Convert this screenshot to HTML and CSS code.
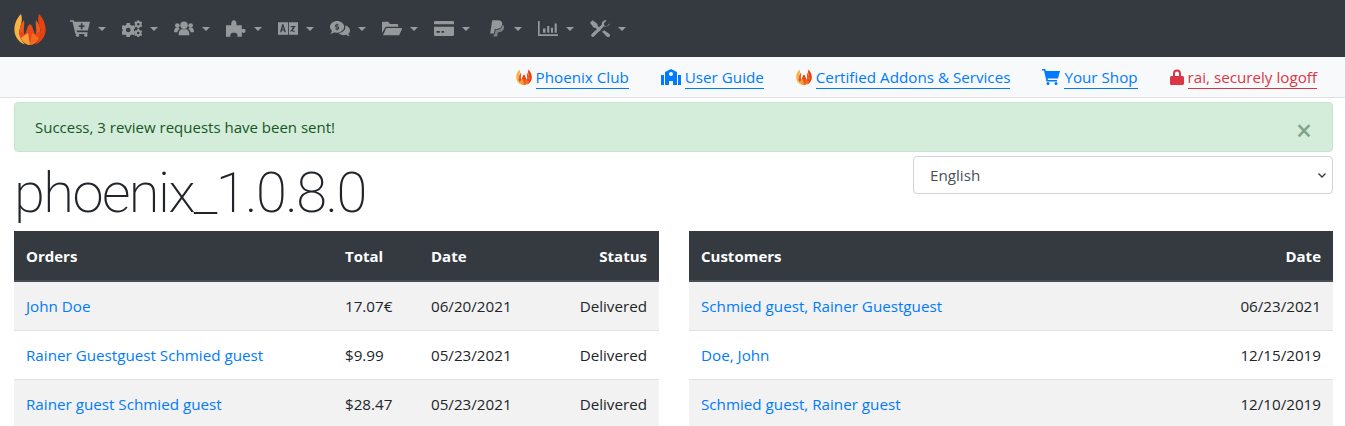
FILE: index.html
```html
<!DOCTYPE html>
<html lang="en">
<head>
<meta charset="UTF-8">
<title>phoenix_1.0.8.0</title>
<link rel="stylesheet" href="styles.css">
</head>
<body>
<svg class="defs" width="0" height="0">
  <symbol id="flame" viewBox="0 0 32 32">
    <path d="M7 1C2 6-1 14 1 21c1.500 5 5 9 10 10.500C7 27 4 21 6 15c1-4 3-8 1-14z" fill="#f7b446"/>
    <path d="M25 1c5 5 8 13 6 20-1.500 5-5 9-10 10.500C25 27 28 21 26 15c-1-4-3-8-1-14z" fill="#e8420f"/>
    <path d="M10 7c-3 4-5 8-4 12l4 2c-1-5 1-9 0-14zM22 7c3 4 5 8 4 12l-4 2c1-5-1-9 0-14z" fill="#ee5a1a"/>
    <path d="M5 18l6 3 2-5 1-3 2-2 2 2 1 3 2 5 6-3c0 8-6 14-11 14S5 26 5 18z" fill="#e8481a"/>
    <path d="M7 25l7-5 2 12c-4 0-7-3-9-7z" fill="#f9a03a"/>
    <path d="M25 25l-7-5-2 12c4 0 7-3 9-7z" fill="#f46a1f"/>
  </symbol>
</svg>

<nav class="topbar">
  <svg class="logo" width="32" height="32"><use href="#flame"/></svg>
  <ul class="menu">
    <li class="menu-item">
      <svg class="menu-icon" viewBox="0 0 24 20"><path d="M0 0h4.500l.7 2H24l-2.500 10.500H8l.4 2H21v2H6.500L3 2H0z"/><circle cx="9" cy="18" r="2"/><circle cx="19" cy="18" r="2"/><path d="M13 3.800h2v2.500h2.500v2H15v2.500h-2V8.300h-2.500v-2H13z" fill="#343a40"/></svg>
    </li>
    <li class="menu-item">
      <svg class="menu-icon" viewBox="0 0 24 20"><path fill-rule="evenodd" d="M5.500 3.500h4l.5 2.300 1.800 1 2.200-.8 2 3.400-1.700 1.600v2l1.700 1.600-2 3.400-2.200-.8-1.800 1-.5 2.300h-4l-.5-2.300-1.800-1-2.200.8-2-3.400L.7 12.900v-2L-1 9.300l2-3.400 2.200.8 1.800-1zm2 5.500a2.800 2.800 0 1 0 0 5.600 2.800 2.800 0 0 0 0-5.600z"/><path fill-rule="evenodd" d="M18.500 0h2l.3 1.300 1.200.7 1.300-.4 1 1.700-1 1v1.400l1 1-1 1.700-1.300-.4-1.200.7-.3 1.300h-2l-.3-1.300-1.200-.7-1.300.4-1-1.700 1-1V4.300l-1-1 1-1.700 1.300.4 1.200-.7zm1 3.500a1.500 1.500 0 1 0 0 3 1.500 1.500 0 0 0 0-3zM18.500 10.500h2l.3 1.300 1.200.7 1.300-.4 1 1.700-1 1v1.400l1 1-1 1.700-1.300-.4-1.200.7-.3 1.300h-2l-.3-1.300-1.200-.7-1.300.4-1-1.700 1-1v-1.400l-1-1 1-1.700 1.300.4 1.200-.7zm1 3.500a1.500 1.500 0 1 0 0 3 1.500 1.500 0 0 0 0-3z"/></svg>
    </li>
    <li class="menu-item">
      <svg class="menu-icon" viewBox="0 0 24 20"><circle cx="12" cy="6" r="4.500"/><circle cx="4" cy="6.500" r="2.800"/><circle cx="20" cy="6.500" r="2.800"/><path d="M5.500 18c0-5 2-7 4.500-7h4c2.500 0 4.500 2 4.500 7z"/><path d="M0 14.500c0-3.500 1-5.500 3-5.500h2.500c.5.500 1 1.200 1.500 1.700C5 12 4.300 13 4.200 14.500zM24 14.500c0-3.500-1-5.500-3-5.500h-2.500c-.5.500-1 1.200-1.500 1.700 2 1.300 2.700 2.300 2.800 3.800z"/></svg>
    </li>
    <li class="menu-item">
      <svg class="menu-icon" viewBox="0 0 24 20"><path d="M0 6h6.500C6 3 7 0 9.500 0S13 3 12.500 6H19v5c2-1.500 4.500-.8 4.500 1.800S21 16 19 14.500V20h-5.500c.8-2.500.2-5-4-5s-4.800 2.500-4 5H0z"/></svg>
    </li>
    <li class="menu-item">
      <svg class="menu-icon" viewBox="0 0 24 20"><path d="M0 2.500h12v15H0zM13 2.500h11v15H13z"/><path d="M5 5L2.500 14.500h1.800l.5-2h2.400l.5 2h1.800L6.500 5zM5.200 11l.8-3 .8 3zM15 7h6v1.200h-1c-.4 2-1.600 3.200-2.600 4l2.800 1.100-.4 1.100-3.700-1.500-1 1-.7-.8c1-.6 2.700-2 3.300-4.900H15z" fill="#343a40"/></svg>
    </li>
    <li class="menu-item">
      <svg class="menu-icon" viewBox="0 0 24 20"><path fill-rule="evenodd" d="M8.500 1C13 1 17 4 17 8s-4 7-8.500 7c-1.200 0-2.300-.2-3.300-.6C4 15.300 2.500 16 .5 16c1-1 1.700-2 2-3.200C1 11.600 0 10 0 8 0 4 4 1 8.500 1zM8 4v1c-1.200.1-2 .9-2 1.900 0 2.100 3.500 1.500 3.500 2.500 0 .3-.4.600-1 .6-.5 0-1-.2-1.400-.5l-.9 1c.5.400 1.100.7 1.800.8v1h1.200v-1c1.100-.2 1.800-1 1.800-2 0-2.200-3.400-1.600-3.400-2.500 0-.3.300-.5.900-.5.400 0 .8.100 1.200.3l.8-1c-.4-.3-1-.5-1.500-.6V4z"/><path d="M18 6.500c3.300.5 6 2.900 6 5.800 0 1.600-.8 3-2 4 .2 1 .9 2 1.800 2.700-1.800 0-3.300-.6-4.300-1.500-1 .3-2 .5-3 .5-2.600 0-5-1-6.300-2.600 5.400-.2 9.800-4.200 7.800-8.900z"/></svg>
    </li>
    <li class="menu-item">
      <svg class="menu-icon" viewBox="0 0 24 20"><path d="M0 3.500C0 2.500.8 2 1.500 2h6l2 2.500H18c1 0 1.500.7 1.500 1.500v2H6c-1.200 0-2 .6-2.500 1.500L0 15.500z"/><path d="M6 9.500h17c.8 0 1.200.7.9 1.400L20.500 18H1.200L4.600 10.400c.3-.6.800-.9 1.400-.9z"/></svg>
    </li>
    <li class="menu-item">
      <svg class="menu-icon" viewBox="0 0 24 20"><path fill-rule="evenodd" d="M1.500 1h21c.8 0 1.500.7 1.500 1.500V5H0V2.500C0 1.700.7 1 1.500 1zM0 8h24v9.500c0 .8-.7 1.500-1.500 1.500h-21C.7 19 0 18.300 0 17.500zm3 5v2h4v-2zm6 0v2h3v-2z"/></svg>
    </li>
    <li class="menu-item">
      <svg class="menu-icon" viewBox="0 0 24 20"><path d="M7.500 0h7c3.500 0 5.500 2 5 5-.6 3.500-3 5.500-6.500 5.500h-2.500L9.500 16H5z"/><path d="M20 5.500c1.500 1 2 2.500 1.700 4-.6 3-3 5-6 5h-1.500l-.8 5H9l.5-2.500h1l1-5.500H13c4 0 6.500-2.500 7-6z" opacity=".75"/></svg>
    </li>
    <li class="menu-item">
      <svg class="menu-icon" viewBox="0 0 24 20"><path d="M2 1v16h22v2H0V1z"/><path d="M6 10h3v5H6zM11 7h2.500v8H11zM15.500 9H18v6h-2.500zM20 4h2.500v11H20z"/></svg>
    </li>
    <li class="menu-item">
      <svg class="menu-icon" viewBox="0 0 24 20"><path d="M3 0l6 4.500v2.200l4.500 4.500-2.300 2.300L6.700 9H4.500L0 3zM17 12l6.300 4.700c1 1 1 2.300 0 3.300-1 .7-2.300.4-3 0L14.500 14z"/><path d="M23.500 4l-3.300 3.200-2.900-.5-.5-2.900L20 .5c-2.700-1.200-6.300.9-5.800 4.800L2 16.500c-1.200 1.200-.4 2.800.3 3.300.8.500 2 .4 2.700-.4L16.500 7.500c3.900.9 8-2.200 7-3.500z"/></svg>
    </li>
  </ul>
</nav>

<div class="subbar">
  <a class="sublink" href="#"><svg class="sub-icon" width="16" height="16"><use href="#flame"/></svg><span class="sublabel">Phoenix Club</span></a>
  <a class="sublink" href="#"><svg class="sub-icon" width="20" height="16" viewBox="0 0 20 16"><path fill-rule="evenodd" d="M10 0l6 3v13h-4v-4H8v4H4V3zm0 3a2 2 0 1 0 0 4 2 2 0 0 0 0-4zM0 6h3v10H0zM17 6h3v10h-3z"/></svg><span class="sublabel">User Guide</span></a>
  <a class="sublink" href="#"><svg class="sub-icon" width="16" height="16"><use href="#flame"/></svg><span class="sublabel">Certified Addons &amp; Services</span></a>
  <a class="sublink" href="#"><svg class="sub-icon" width="18" height="16" viewBox="0 0 18 16"><path d="M0 0h3.300l.5 2H18l-2 7.500H5.600l.3 1.500H15v1.500H4.500L2 1.500H0z"/><circle cx="6" cy="14.500" r="1.500"/><circle cx="14" cy="14.500" r="1.500"/></svg><span class="sublabel">Your Shop</span></a>
  <a class="sublink danger" href="#"><svg class="sub-icon" width="14" height="16" viewBox="0 0 14 16"><path fill-rule="evenodd" d="M3 7V4.500a4 4 0 0 1 8 0V7h1.500c.8 0 1.500.7 1.500 1.500v6c0 .8-.7 1.500-1.500 1.500h-11C.7 16 0 15.300 0 14.500v-6C0 7.700.7 7 1.500 7zm2 0h4V4.500a2 2 0 0 0-4 0z"/></svg><span class="sublabel">rai, securely logoff</span></a>
</div>

<main class="content">
  <div class="alert">
    <span>Success, 3 review requests have been sent!</span>
    <span class="alert-close">&times;</span>
  </div>

  <div class="head-row">
    <h1 class="title">phoenix_1.0.8.0</h1>
    <select class="lang-select"><option>English</option></select>
  </div>

  <div class="panels">
    <table class="data-table orders">
      <thead>
        <tr><th>Orders</th><th>Total</th><th>Date</th><th class="right">Status</th></tr>
      </thead>
      <tbody>
        <tr><td><a href="#">John Doe</a></td><td>17.07€</td><td>06/20/2021</td><td class="right">Delivered</td></tr>
        <tr><td><a href="#">Rainer Guestguest Schmied guest</a></td><td>$9.99</td><td>05/23/2021</td><td class="right">Delivered</td></tr>
        <tr><td><a href="#">Rainer guest Schmied guest</a></td><td>$28.47</td><td>05/23/2021</td><td class="right">Delivered</td></tr>
      </tbody>
    </table>
    <table class="data-table">
      <thead>
        <tr><th>Customers</th><th class="right">Date</th></tr>
      </thead>
      <tbody>
        <tr><td><a href="#">Schmied guest, Rainer Guestguest</a></td><td class="right">06/23/2021</td></tr>
        <tr><td><a href="#">Doe, John</a></td><td class="right">12/15/2019</td></tr>
        <tr><td><a href="#">Schmied guest, Rainer guest</a></td><td class="right">12/10/2019</td></tr>
      </tbody>
    </table>
  </div>
</main>
</body>
</html>
```

FILE: styles.css
```css
* {
    box-sizing: border-box;
}
html, body {
    height: 426px;
    overflow: hidden;
}
body {
    margin: 0;
    background-color: #fff;
    color: #212529;
    font-family: "Open Sans", "Noto Sans", sans-serif;
    font-size: 15px;
    line-height: 24px;
}
a {
    color: #007bff;
    text-decoration: none;
}
.defs {
    position: absolute;
}
.topbar {
    display: flex;
    align-items: center;
    height: 57px;
    padding: 0 14px;
    background-color: #343a40;
}
.logo {
    flex: none;
    margin: 0 8px 0 0;
}
.menu {
    display: flex;
    align-items: center;
    gap: 12px;
    margin: 0;
    padding: 0 0 0 16px;
    list-style: none;
}
.menu-item {
    display: flex;
    align-items: center;
    width: 40px;
}
.menu-item::after {
    content: "";
    margin-left: 8px;
    border-top: 4px solid #999c9f;
    border-left: 4px solid transparent;
    border-right: 4px solid transparent;
}
.menu-icon {
    flex: none;
    width: 20px;
    height: 17px;
    fill: #95999c;
}
.subbar {
    display: flex;
    justify-content: flex-end;
    gap: 32px;
    height: 41px;
    padding: 8px 28px 0 0;
    background-color: #f8f9fa;
    border-bottom: 1px solid #dee2e6;
}
.sublink {
    display: flex;
    align-items: center;
    height: 24px;
    font-size: 15.2px;
}
.sub-icon {
    flex: none;
    margin-right: 4px;
    fill: currentColor;
}
.sublabel {
    border-bottom: 1px solid currentColor;
    line-height: 22px;
}
.danger {
    color: #dc3545;
}
.content {
    padding: 4px 12px 0 14px;
}
.alert {
    display: flex;
    justify-content: space-between;
    height: 50px;
    padding: 12px 20px;
    color: #155724;
    background-color: #d4edda;
    border: 1px solid #c3e6cb;
    border-radius: 4px;
}
.alert-close {
    margin-top: 3px;
    color: #7fa589;
    font-size: 28px;
    font-weight: 600;
}
.head-row {
    display: flex;
    justify-content: space-between;
    align-items: flex-start;
    height: 79px;
    padding-top: 4px;
}
.title {
    margin: 4px 0 0;
    font-family: Roboto, sans-serif;
    font-size: 56px;
    font-weight: 200;
    line-height: 67px;
    letter-spacing: -1.55px;
}
.lang-select {
    width: 420px;
    height: 38px;
    padding: 0 16px;
    color: #495057;
    background: #fff url("data:image/svg+xml,%3Csvg xmlns='http://www.w3.org/2000/svg' width='8' height='5' viewBox='0 0 8 5'%3E%3Cpath d='M.5.5L4 4 7.500.5' fill='none' stroke='%23343a40' stroke-width='1.300'/%3E%3C/svg%3E") no-repeat right 6px center;
    border: 1px solid #ced4da;
    border-radius: 4px;
    font-family: inherit;
    font-size: 15.2px;
    appearance: none;
}
.panels {
    display: grid;
    grid-template-columns: 645px 644px;
    gap: 30px;
}
.data-table {
    width: 100%;
    border-collapse: collapse;
}
.data-table th {
    height: 50px;
    padding: 12px;
    color: #fff;
    background-color: #343a40;
    border-bottom: 2px solid #454d55;
    text-align: left;
    font-weight: 700;
}
.data-table td {
    height: 49px;
    padding: 12px;
    border-top: 1px solid #dee2e6;
    font-size: 15.2px;
}
.data-table tbody tr:first-child td {
    border-top: 0;
}
.data-table tbody tr:nth-child(odd) {
    background-color: #f2f2f2;
}
.data-table .right {
    text-align: right;
}
.orders th:nth-child(2) {
    width: 86px;
}
.orders th:nth-child(3) {
    width: 130px;
}
.orders th:nth-child(4) {
    width: 110px;
}
```
